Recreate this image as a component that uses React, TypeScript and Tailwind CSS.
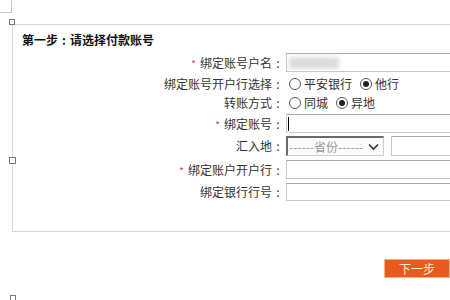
import React from 'react';

const font = { fontFamily: '"Noto Sans CJK SC", "Liberation Sans", sans-serif' };

// full-width colon, centred in its cell as in the reference
const Colon = () => <span className="inline-block w-[12px] text-center">:</span>;

const Label = ({ text, required }: { text: string; required?: boolean }) => (
  <div className="w-[272px] shrink-0 pr-[1px] text-right text-[12px] leading-none text-[#333]">
    {required && <span className="mr-[4px] text-[10px] text-[#e4393c]">*</span>}
    {text}
    <Colon />
  </div>
);

const TextBox = ({ className = '', children }: { className?: string; children?: React.ReactNode }) => (
  <div
    className={`flex h-full items-center border border-[#c9c9c9] border-t-[#a9a9a9] bg-white ${className}`}
  >
    {children}
  </div>
);

const Radio = ({ label, checked }: { label: string; checked?: boolean }) => (
  <label className="flex items-center gap-[3px] text-[12px] leading-none text-[#333]">
    <span className="flex h-[12px] w-[12px] items-center justify-center rounded-full border border-[#555] bg-white">
      {checked && <span className="h-[6px] w-[6px] rounded-full bg-[#222]" />}
    </span>
    {label}
  </label>
);

export default function App() {
  return (
    <div className="relative h-[300px] w-[450px] overflow-hidden bg-white" style={font}>
      {/* crop mark top-left */}
      <div className="absolute left-0 top-0 h-[13px] w-[12px] border-b border-r border-[#c8c8c8]" />
      {/* editor handles */}
      <div className="absolute left-[9px] top-[19px] h-[6px] w-[6px] border border-[#777] bg-white" />
      <div className="absolute left-[9px] top-[157px] h-[7px] w-[7px] border border-[#777] bg-white" />
      <div className="absolute left-[10px] top-[295px] h-[6px] w-[6px] border border-[#777] bg-white" />

      <div className="pl-[12px] pt-[24px]">
        <div className="h-[208px] w-[460px] border-b border-l border-t border-[#d6d6d6]">
          <div className="pl-[9px] pt-[8px] text-[12px] font-bold leading-[14px] text-[#111]">
            第一步<Colon />请选择付款账号
          </div>

          <div className="mt-[6px] flex flex-col">
            <div className="flex h-[19px] items-center">
              <Label text="绑定账号户名" required />
              <TextBox className="ml-[1px] w-[180px]">
                <span className="ml-[2px] h-[12px] w-[50px] bg-[#dcdcdc] blur-[2px]" />
              </TextBox>
            </div>

            <div className="mt-[2px] flex h-[20px] items-center">
              <Label text="绑定账号开户行选择" />
              <div className="ml-[4px] flex items-center gap-[8px]">
                <Radio label="平安银行" />
                <Radio label="他行" checked />
              </div>
            </div>

            <div className="flex h-[18px] items-center">
              <Label text="转账方式" />
              <div className="ml-[4px] flex items-center gap-[8px]">
                <Radio label="同城" />
                <Radio label="异地" checked />
              </div>
            </div>

            <div className="mt-[2px] flex h-[19px] items-center">
              <Label text="绑定账号" required />
              <TextBox className="ml-[1px] w-[180px]">
                <span className="ml-[1px] h-[14px] w-[1px] bg-black" />
              </TextBox>
            </div>

            <div className="mt-[3px] flex h-[20px] items-center">
              <Label text="汇入地" />
              <div className="ml-[1px] flex h-full w-[98px] items-center justify-between border border-l-2 border-t-2 border-[#cfcfcf] border-l-[#6a6a6a] border-t-[#6a6a6a] bg-[#fbfbfb] pl-[1px] pr-[4px]">
                <span className="text-[12px] leading-none text-[#9a9a9a]">------省份------</span>
                <svg width="11" height="8" viewBox="0 0 11 8" fill="none">
                  <path d="M1 1.5 L5.5 6 L10 1.5" stroke="#333" strokeWidth="1.6" />
                </svg>
              </div>
              <TextBox className="ml-[7px] w-[80px]" />
            </div>

            <div className="mt-[4px] flex h-[19px] items-center">
              <Label text="绑定账户开户行" required />
              <TextBox className="ml-[1px] w-[180px]" />
            </div>

            <div className="mt-[4px] flex h-[18px] items-center">
              <Label text="绑定银行行号" />
              <TextBox className="ml-[1px] w-[180px]" />
            </div>
          </div>
        </div>

        <div className="mt-[27px] flex justify-end">
          <button className="flex h-[19px] w-[66px] items-center justify-center border border-[#f3b089] bg-[#ea5a1e] text-[12px] leading-none text-[#fff1e8]">
            下一步
          </button>
        </div>
      </div>
    </div>
  );
}
